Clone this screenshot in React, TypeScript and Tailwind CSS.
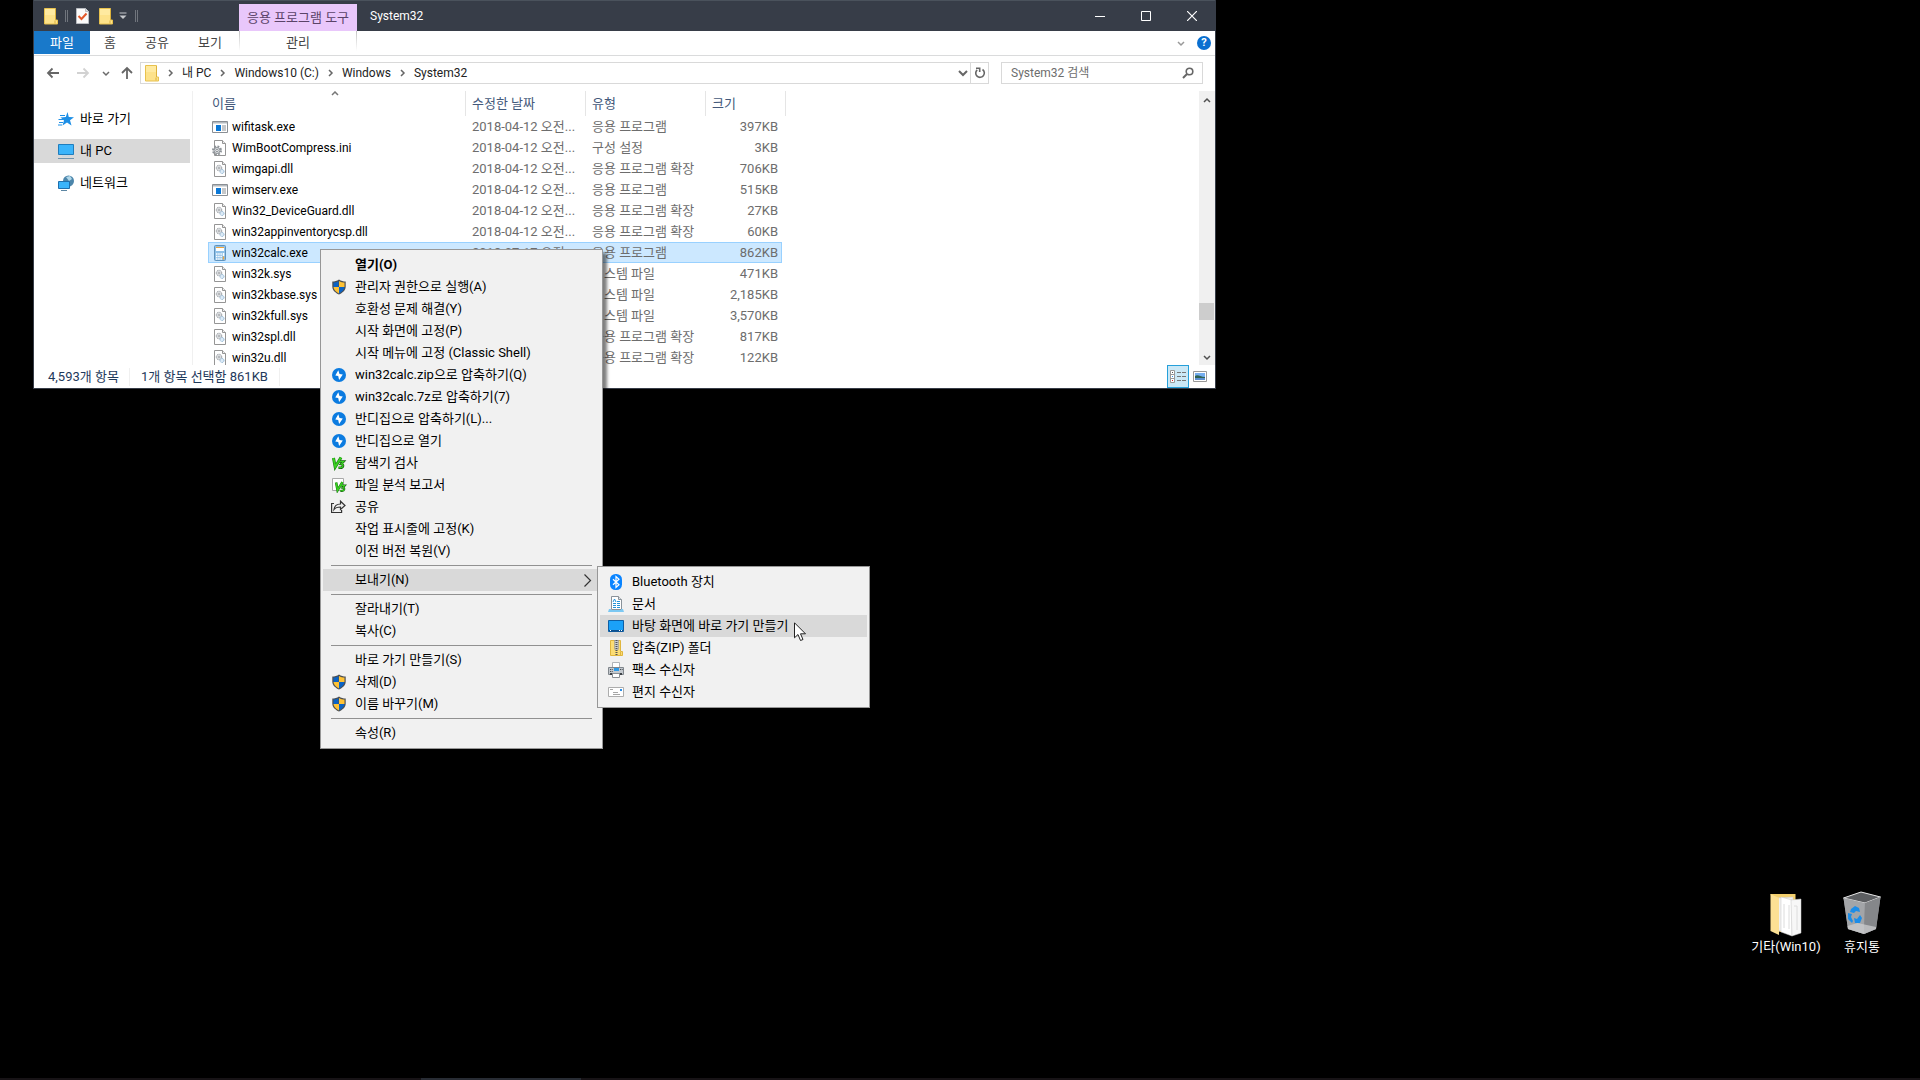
import { useState } from 'react'
import type { ReactNode } from 'react'

type FileKind = 'exe' | 'ini' | 'dll' | 'calc'

const files: { name: string; date: string; type: string; size: string; kind: FileKind }[] = [
  { name: 'wifitask.exe', date: '2018-04-12 오전...', type: '응용 프로그램', size: '397KB', kind: 'exe' },
  { name: 'WimBootCompress.ini', date: '2018-04-12 오전...', type: '구성 설정', size: '3KB', kind: 'ini' },
  { name: 'wimgapi.dll', date: '2018-04-12 오전...', type: '응용 프로그램 확장', size: '706KB', kind: 'dll' },
  { name: 'wimserv.exe', date: '2018-04-12 오전...', type: '응용 프로그램', size: '515KB', kind: 'exe' },
  { name: 'Win32_DeviceGuard.dll', date: '2018-04-12 오전...', type: '응용 프로그램 확장', size: '27KB', kind: 'dll' },
  { name: 'win32appinventorycsp.dll', date: '2018-04-12 오전...', type: '응용 프로그램 확장', size: '60KB', kind: 'dll' },
  { name: 'win32calc.exe', date: '2018-07-17 오전...', type: '응용 프로그램', size: '862KB', kind: 'calc' },
  { name: 'win32k.sys', date: '2018-04-12 오전...', type: '시스템 파일', size: '471KB', kind: 'dll' },
  { name: 'win32kbase.sys', date: '2018-04-12 오전...', type: '시스템 파일', size: '2,185KB', kind: 'dll' },
  { name: 'win32kfull.sys', date: '2018-04-12 오전...', type: '시스템 파일', size: '3,570KB', kind: 'dll' },
  { name: 'win32spl.dll', date: '2018-04-12 오전...', type: '응용 프로그램 확장', size: '817KB', kind: 'dll' },
  { name: 'win32u.dll', date: '2018-04-12 오전...', type: '응용 프로그램 확장', size: '122KB', kind: 'dll' },
]

function FolderIcon() {
  return (
    <svg width="14" height="17" viewBox="0 0 14 17" className="shrink-0">
      <path d="M0.5 0.5h11v11.5h2v4H0.5z" fill="#fde28a" stroke="#e8c24e" />
      <path d="M11.5 12V1M11 12.5v3" stroke="#dcb23c" />
      <path d="M1 1h10v6H1z" fill="#ffeaa0" />
    </svg>
  )
}

function CheckDocIcon() {
  return (
    <svg width="13" height="16" viewBox="0 0 13 16" className="shrink-0">
      <path d="M0.5 0.5h9l3 3v12H0.5z" fill="#fafafa" stroke="#b9bcc2" />
      <path d="M9.5 0.5v3h3" fill="#ddd" stroke="#b9bcc2" />
      <path d="M2.5 8l3 3 5-5.500" fill="none" stroke="#e2582a" strokeWidth="2" />
    </svg>
  )
}

function FileIcon({ kind }: { kind: FileKind }) {
  if (kind === 'exe') {
    return (
      <svg width="16" height="16" viewBox="0 0 16 16" className="shrink-0">
        <path d="M0.500 2.500h15v11h-15z" fill="#fff" stroke="#8a8f94" />
        <path d="M1 3h14v1.500H1z" fill="#b5babf" />
        <path d="M4 6h5v6H4z" fill="#0a78d7" />
        <path d="M10 7h4M10 9h4M10 11h4" stroke="#8a8f94" />
      </svg>
    )
  }
  if (kind === 'calc') {
    return (
      <svg width="16" height="16" viewBox="0 0 16 16" className="shrink-0">
        <rect x="2.500" y="0.500" width="11" height="15" rx="1" fill="#8fc1e8" stroke="#5f93bd" />
        <rect x="4" y="2" width="8" height="4" fill="#fff" />
        <path d="M4 2.500h8" stroke="#f0a53c" />
        <path d="M4 9h6M4 11.500h6M4 14h6" stroke="#fff" strokeWidth="1.500" strokeDasharray="1.500 0.700" />
        <path d="M11.500 8v3" stroke="#fff" strokeWidth="1.500" />
        <path d="M11.500 11.500v3" stroke="#f0a53c" strokeWidth="1.500" />
      </svg>
    )
  }
  if (kind === 'ini') {
    return (
      <svg width="16" height="16" viewBox="0 0 16 16" className="shrink-0">
        <path d="M2.500 0.500h8l3 3v12h-11z" fill="#fff" stroke="#959595" />
        <path d="M10.500 0.500v3h3" fill="#eee" stroke="#959595" />
        <circle cx="5" cy="10.500" r="4" fill="none" stroke="#8d9297" strokeWidth="2" strokeDasharray="1.800 1.340" />
        <circle cx="5" cy="10.500" r="3" fill="#dfe2e4" stroke="#8d9297" />
        <circle cx="5" cy="10.500" r="1.200" fill="#fff" stroke="#8d9297" />
      </svg>
    )
  }
  return (
    <svg width="16" height="16" viewBox="0 0 16 16" className="shrink-0">
      <path d="M2.500 0.500h8l3 3v12h-11z" fill="#fff" stroke="#959595" />
      <path d="M10.500 0.500v3h3" fill="#eee" stroke="#959595" />
      <circle cx="7" cy="7" r="2.700" fill="#eceef0" stroke="#8d9297" strokeDasharray="1.200 0.500" />
      <circle cx="7" cy="7" r="1" fill="#fff" stroke="#8d9297" strokeWidth="0.800" />
      <circle cx="10" cy="10.500" r="2" fill="#dcebf7" stroke="#8fb4d2" strokeDasharray="1.200 0.500" />
    </svg>
  )
}

function ShieldIcon() {
  return (
    <svg width="16" height="16" viewBox="0 0 16 16">
      <path d="M8 0.500C6 2 3.500 2.500 1.300 2.500v5c0 4 3.400 6.500 6.700 8 3.300-1.500 6.700-4 6.700-8v-5C12.500 2.500 10 2 8 0.500z" fill="#4c4f52" />
      <path d="M7.500 2C6 3 4 3.500 2.500 3.600V8h5z" fill="#0b63c5" />
      <path d="M8 2c1.500 1 4 1.500 5.500 1.600V8H8z" fill="#ffc234" />
      <path d="M2.500 8c.200 3 2.600 5 5.500 6.400V8z" fill="#ffc234" />
      <path d="M13.500 8c-.200 3-2.600 5-5.500 6.400V8z" fill="#0b63c5" />
    </svg>
  )
}

function BandizipIcon() {
  return (
    <svg width="16" height="16" viewBox="0 0 16 16">
      <circle cx="8" cy="8" r="7" fill="#0b7be0" />
      <path d="M7.300 3.200L4.300 8.500l2.900.600.900 4 3.700-5.500-3.300-.500z" fill="#fff" />
    </svg>
  )
}

function V3Icon({ page }: { page?: boolean }) {
  const blade = 'M2.500 3l1.700 9L10 2.500'
  const hook = 'M8.500 6.500h4L10.300 9c2.700.200 2 3.700-.800 3.700H7.500'
  return (
    <svg width="16" height="16" viewBox="0 0 16 16" fill="none">
      {page && <path d="M1.500 1.500h11v12h-11z" fill="#fff" stroke="#a9a9a9" />}
      <g transform={page ? 'translate(3 3) scale(0.850)' : undefined}>
        <path d={blade} stroke="#1a7d10" strokeWidth="3" />
        <path d={hook} stroke="#145f0d" strokeWidth="2.600" />
        <path d={blade} stroke="#3ad122" strokeWidth="1.800" />
        <path d={hook} stroke="#3ad122" strokeWidth="1.200" />
      </g>
    </svg>
  )
}

function ShareIcon() {
  return (
    <svg width="16" height="16" viewBox="0 0 16 16" fill="none" stroke="#333" strokeWidth="1.200">
      <path d="M3 4.500H0.600v9h10v-2.500" />
      <path d="M3 10.500c.500-4 2.500-5.500 6.500-5.500V2.200L14 6.500l-4.500 4V8C7 8 4.500 8.500 3 10.500z" />
    </svg>
  )
}

function BluetoothIcon() {
  return (
    <svg width="16" height="16" viewBox="0 0 16 16">
      <rect x="2" y="0" width="12" height="16" rx="5.500" fill="#0a84ff" />
      <path d="M5 5.200l6 5.600-3 2.700v-11l3 2.700-6 5.600" fill="none" stroke="#fff" strokeWidth="1.200" />
    </svg>
  )
}

function DocumentsIcon() {
  return (
    <svg width="16" height="16" viewBox="0 0 16 16">
      <path d="M3.500 0.500h7l3 3v10h-10z" fill="#fff" stroke="#8a9299" />
      <path d="M10.500 0.500v3h3" fill="#dfe3e6" stroke="#8a9299" />
      <path d="M5 6l1.500-3L8 6M9 5.500h3M5 7.500h3M9 7.500h3M5 9.500h3M9 9.500h3M5 11.500h3M9 11.500h3" fill="none" stroke="#2493d8" />
      <path d="M1 13h2v1h10v-1h2l1 3H0z" fill="#7cc8f2" />
    </svg>
  )
}

function DesktopIcon() {
  return (
    <svg width="16" height="16" viewBox="0 0 16 16">
      <path d="M0.500 2.500h15v11h-15z" fill="#1ba1f8" stroke="#0e5fa5" />
      <path d="M1 12h14v1.500H1z" fill="#0c4f8d" />
      <path d="M2 12.500h1M11 12.500h1M13 12.500h1" stroke="#fff" />
    </svg>
  )
}

function ZipIcon() {
  return (
    <svg width="16" height="16" viewBox="0 0 16 16">
      <path d="M2.500 0.500h10v11h2v4h-12z" fill="#fbdc74" stroke="#e0b63e" />
      <path d="M6.500 0h4v9l-1 1h-2l-1-1z" fill="#c9cccf" stroke="#888" strokeWidth="0.500" />
      <path d="M8.500 0v16" stroke="#555" strokeWidth="2" strokeDasharray="1 1" />
      <path d="M12.500 12v3" stroke="#e0b63e" />
    </svg>
  )
}

function FaxIcon() {
  return (
    <svg width="16" height="16" viewBox="0 0 16 16">
      <path d="M4.500 0.500h7v5h-7z" fill="#fff" stroke="#b0b4b8" />
      <path d="M0.500 5.500h15v7h-15z" fill="#c3c8cd" stroke="#80868c" />
      <path d="M6 6h5v3H6z" fill="#2d9be8" />
      <path d="M2 7.500h3M2 9.500h3M12 7.500h3" stroke="#4b5157" strokeDasharray="1 0.700" />
      <path d="M2 11h12v2H2z" fill="#3c4146" />
      <path d="M4.500 11.500h7v4h-7z" fill="#fff" stroke="#8a8f94" />
    </svg>
  )
}

function MailIcon() {
  return (
    <svg width="16" height="16" viewBox="0 0 16 16">
      <path d="M0.500 3.500h15v9h-15z" fill="#fff" stroke="#adadad" />
      <path d="M2 5.500h3M5 8.500h5M5 10.500h7" stroke="#a5a5a5" />
      <path d="M12 5h2v2h-2z" fill="#2d8fe8" />
    </svg>
  )
}

function Chevron({ dir, className }: { dir: 'up' | 'down' | 'right'; className?: string }) {
  const paths = { up: 'M1 6l3-3 3 3', down: 'M1 3l3 3 3-3', right: 'M3 1l3 3-3 3' }
  return (
    <svg width="8" height="8" viewBox="0 0 8 8" fill="none" stroke="currentColor" strokeWidth="1.500" className={className}>
      <path d={paths[dir]} />
    </svg>
  )
}

type MenuEntry = { label: string; icon?: ReactNode; bold?: boolean; active?: boolean; arrow?: boolean } | 'line'

const contextMenu: MenuEntry[] = [
  { label: '열기(O)', bold: true },
  { label: '관리자 권한으로 실행(A)', icon: <ShieldIcon /> },
  { label: '호환성 문제 해결(Y)' },
  { label: '시작 화면에 고정(P)' },
  { label: '시작 메뉴에 고정 (Classic Shell)' },
  { label: 'win32calc.zip으로 압축하기(Q)', icon: <BandizipIcon /> },
  { label: 'win32calc.7z로 압축하기(7)', icon: <BandizipIcon /> },
  { label: '반디집으로 압축하기(L)...', icon: <BandizipIcon /> },
  { label: '반디집으로 열기', icon: <BandizipIcon /> },
  { label: '탐색기 검사', icon: <V3Icon /> },
  { label: '파일 분석 보고서', icon: <V3Icon page /> },
  { label: '공유', icon: <ShareIcon /> },
  { label: '작업 표시줄에 고정(K)' },
  { label: '이전 버전 복원(V)' },
  'line',
  { label: '보내기(N)', active: true, arrow: true },
  'line',
  { label: '잘라내기(T)' },
  { label: '복사(C)' },
  'line',
  { label: '바로 가기 만들기(S)' },
  { label: '삭제(D)', icon: <ShieldIcon /> },
  { label: '이름 바꾸기(M)', icon: <ShieldIcon /> },
  'line',
  { label: '속성(R)' },
]

const sendToMenu: MenuEntry[] = [
  { label: 'Bluetooth 장치', icon: <BluetoothIcon /> },
  { label: '문서', icon: <DocumentsIcon /> },
  { label: '바탕 화면에 바로 가기 만들기', icon: <DesktopIcon />, active: true },
  { label: '압축(ZIP) 폴더', icon: <ZipIcon /> },
  { label: '팩스 수신자', icon: <FaxIcon /> },
  { label: '편지 수신자', icon: <MailIcon /> },
]

function Menu({ items, className }: { items: MenuEntry[]; className: string }) {
  return (
    <div role="menu" className={`absolute border border-[#979797] bg-[#f1f1f1] px-0.5 py-1 text-black ${className}`}>
      {items.map((item, i) =>
        item === 'line' ? (
          <div key={i} className="mx-2 flex h-[7px] items-center">
            <div className="h-px w-full bg-[#919191]" />
          </div>
        ) : (
          <button
            key={i}
            role="menuitem"
            className={`flex h-[22px] w-full items-center pr-2 pl-2 text-left whitespace-nowrap ${item.active ? 'bg-[#d9d9d9]' : ''} ${item.bold ? 'font-bold' : ''}`}
          >
            <span className="mr-2 w-4 shrink-0">{item.icon}</span>
            <span className="flex-1">{item.label}</span>
            {item.arrow && (
              <svg width="9" height="13" viewBox="0 0 9 13" fill="none" stroke="#333" strokeWidth="1.200">
                <path d="M1.500 0.500l6 6-6 6" />
              </svg>
            )}
          </button>
        )
      )}
    </div>
  )
}

function TitleBar() {
  return (
    <div className="flex h-[31px] border-t border-[#4a525c] bg-[#373d48]">
      <div className="flex w-[205px] items-center pl-2.5">
        <FolderIcon />
        <span className="ml-[7px] h-3 w-[3px] border-x border-[#70757d]" />
        <span className="ml-2"><CheckDocIcon /></span>
        <span className="ml-2.5"><FolderIcon /></span>
        <svg width="8" height="8" viewBox="0 0 8 8" className="ml-1.5">
          <path d="M0.500 1h7" stroke="#c5c8cc" />
          <path d="M0.500 3.500h7L4 7z" fill="#c5c8cc" />
        </svg>
        <span className="ml-2 h-3 w-[3px] border-x border-[#70757d]" />
      </div>
      <div className="mt-[3px] flex w-[118px] items-center justify-center bg-[#e9c7fb] text-[#5a4368]">응용 프로그램 도구</div>
      <h1 className="flex-1 self-center pl-[13px] text-xs text-white">System32</h1>
      <button aria-label="최소화" className="flex w-[46px] items-center justify-center">
        <svg width="10" height="10"><path d="M0 5.500h10" stroke="#fff" /></svg>
      </button>
      <button aria-label="최대화" className="flex w-[46px] items-center justify-center">
        <svg width="10" height="10"><path d="M0.500 0.500h9v9h-9z" fill="none" stroke="#fff" /></svg>
      </button>
      <button aria-label="닫기" className="flex w-[46px] items-center justify-center">
        <svg width="10" height="10"><path d="M0 0l10 10M10 0L0 10" stroke="#fff" strokeWidth="1.200" /></svg>
      </button>
    </div>
  )
}

function RibbonTabs() {
  return (
    <div className="flex h-[25px] border-b border-[#dadbdc] text-[#444]">
      <button className="mb-px w-14 bg-[#1979ca] text-white">파일</button>
      <button className="w-10">홈</button>
      <button className="w-[54px]">공유</button>
      <button className="w-[52px]">보기</button>
      <div className="ml-[3px] flex w-[118px]">
        <div className="h-5 w-px bg-linear-to-b from-[#c4c4c4] to-white" />
        <button className="flex-1">관리</button>
        <div className="h-5 w-px bg-linear-to-b from-[#c4c4c4] to-white" />
      </div>
      <div className="flex flex-1 items-center justify-end gap-3 pr-1">
        <button aria-label="리본 확장"><Chevron dir="down" className="text-[#999]" /></button>
        <button aria-label="도움말" className="size-3.5 rounded-full bg-[#0a6fd0] text-center text-[11px] leading-[14px] font-bold text-white">?</button>
      </div>
    </div>
  )
}

function AddressBar() {
  return (
    <div className="flex h-[35px] items-center pr-3 pb-px text-[#222]">
      <div className="flex w-[106px] items-center pl-3 text-[#6b6b6b]">
        <button aria-label="뒤로">
          <svg width="14" height="12" viewBox="0 0 14 12" fill="none" stroke="#666" strokeWidth="1.800"><path d="M13 6H2M6.500 1.500L2 6l4.500 4.500" /></svg>
        </button>
        <button aria-label="앞으로" className="ml-4">
          <svg width="14" height="12" viewBox="0 0 14 12" fill="none" stroke="#d2d2d2" strokeWidth="1.800"><path d="M1 6h11M7.500 1.500L12 6l-4.500 4.500" /></svg>
        </button>
        <button aria-label="최근 위치" className="ml-3"><Chevron dir="down" /></button>
        <button aria-label="위로" className="ml-2.5">
          <svg width="14" height="14" viewBox="0 0 14 14" fill="none" stroke="#666" strokeWidth="1.800"><path d="M7 13V2M2 7l5-5 5 5" /></svg>
        </button>
      </div>
      <div className="flex h-[22px] flex-1 items-center border border-[#d9d9d9] pl-1">
        <FolderIcon />
        {['내 PC', 'Windows10 (C:)', 'Windows', 'System32'].map((crumb) => (
          <span key={crumb} className="flex items-center">
            <Chevron dir="right" className="mr-2 ml-[7px] text-[#666]" />
            <a href="#" className="text-xs whitespace-nowrap">{crumb}</a>
          </span>
        ))}
        <button aria-label="이전 위치" className="ml-auto pr-0.5">
          <svg width="10" height="8" viewBox="0 0 10 8" fill="none" stroke="#666" strokeWidth="2"><path d="M1 2l4 4 4-4" /></svg>
        </button>
        <button aria-label="새로 고침" className="flex h-full w-[18px] items-center justify-center border-l border-[#d9d9d9]">
          <svg width="12" height="12" viewBox="0 0 12 12" fill="none" stroke="#666" strokeWidth="1.600">
            <path d="M8.500 2.500a4.300 4.300 0 1 1-5.300.300" />
            <path d="M2 1.300h3.700V5" />
          </svg>
        </button>
      </div>
      <label className="ml-3 flex h-[22px] w-[202px] items-center border border-[#d9d9d9] pr-2 pl-[9px]">
        <input aria-label="System32 검색" placeholder="System32 검색" className="w-full min-w-0 text-xs outline-none placeholder:text-[#6d6d6d]" />
        <svg width="12" height="12" viewBox="0 0 12 12" fill="none" stroke="#666" strokeWidth="1.600" className="shrink-0">
          <circle cx="7.500" cy="4.500" r="3.300" />
          <path d="M5 7L1 11" strokeWidth="2" />
        </svg>
      </label>
    </div>
  )
}

function Sidebar() {
  return (
    <nav className="flex w-[159px] flex-col gap-2 border-r border-[#f0f0f0] pt-4 pr-0.5 text-black">
      <a href="#" className="flex h-6 items-center gap-1.5 pl-6">
        <svg width="16" height="16" viewBox="0 0 16 16">
          <path d="M9.500 1l1.300 5L16 6.200 12 9.300l1.500 5.200-4.500-3-4.500 3L6 9.500 2.500 6.500 7.800 6z" fill="#1d8fe6" />
          <path d="M2 4.500h5M0.500 8.500h5M1 11.500h4M0 14h4" stroke="#1d8fe6" />
        </svg>
        바로 가기
      </a>
      <a href="#" className="flex h-6 items-center gap-1.5 bg-[#d9d9d9] pl-6">
        <svg width="16" height="16" viewBox="0 0 16 16">
          <path d="M0.500 1.500h15v10h-15z" fill="#3ab4fb" stroke="#1f7dbd" />
          <path d="M4 13h8" stroke="#b9d4e6" />
          <path d="M0 15.500h16" stroke="#6f93ad" />
        </svg>
        내 PC
      </a>
      <a href="#" className="flex h-6 items-center gap-1.5 pl-6">
        <svg width="16" height="16" viewBox="0 0 16 16">
          <circle cx="10.500" cy="6" r="5.500" fill="#4c86ab" />
          <path d="M8 2l4-1 2 3-3 2z" fill="#b2d8ea" />
          <path d="M0.500 6.500h11v7h-11z" fill="#3ab4fb" stroke="#1f6fad" />
          <path d="M3 15.500h6" stroke="#5c86a3" />
        </svg>
        네트워크
      </a>
    </nav>
  )
}

function FileTable() {
  const [selected, setSelected] = useState('win32calc.exe')

  return (
    <div className="flex-1 overflow-hidden pl-[15px]">
      <table className="w-[578px] table-fixed border-separate border-spacing-0">
        <thead>
          <tr className="h-[25px] text-left text-[#44597b] *:border-[#e5e5e5] *:font-normal">
            <th className="relative w-[258px] border-r pl-1">
              이름
              <Chevron dir="up" className="absolute -top-0.5 left-[123px] text-[#777]" />
            </th>
            <th className="w-[120px] border-r pl-1.5">수정한 날짜</th>
            <th className="w-[120px] border-r pl-1.5">유형</th>
            <th className="w-[76px] pl-1.5">크기</th>
            <td className="w-1 border-r" />
          </tr>
        </thead>
        <tbody>
          {files.map((file) => {
            const isSelected = file.name === selected
            const cell = isSelected ? 'border-y border-[#99d1ff] bg-[#cce8ff]' : ''
            return (
              <tr key={file.name} onClick={() => setSelected(file.name)} className="h-[21px] leading-[18px] whitespace-nowrap text-[#6d6d6d]">
                <td className={`text-xs leading-[18px] text-black ${cell} ${isSelected ? 'border-l pl-[3px]' : 'pl-1'}`}>
                  <div className="flex items-center gap-1">
                    <FileIcon kind={file.kind} />
                    {file.name}
                  </div>
                </td>
                <td className={`pl-1.5 ${cell}`}>{file.date}</td>
                <td className={`pl-1.5 ${cell}`}>{file.type}</td>
                <td className={`text-right ${cell} ${isSelected ? 'border-r pr-[3px]' : 'pr-1'}`}>{file.size}</td>
              </tr>
            )
          })}
        </tbody>
      </table>
    </div>
  )
}

function ScrollBar() {
  return (
    <div className="flex w-4 flex-col items-center bg-[#f0f0f0] pr-px text-[#505050]">
      <button aria-label="위로 스크롤" className="flex h-[17px] items-center">
        <Chevron dir="up" />
      </button>
      <div className="flex w-full flex-1 flex-col justify-end pb-7">
        <div className="h-[17px] bg-[#cdcdcd]" />
      </div>
      <button aria-label="아래로 스크롤" className="flex h-[17px] items-center">
        <Chevron dir="down" />
      </button>
    </div>
  )
}

function StatusBar() {
  return (
    <div className="flex h-[23px] items-center text-[#1e395b]">
      <span className="w-24 border-r border-[#f0f0f0] pl-3.5">4,593개 항목</span>
      <span className="border-r border-[#f0f0f0] px-[11px]">1개 항목 선택함 861KB</span>
      <button aria-label="자세히" className="ml-auto flex h-full w-[22px] items-center justify-center border border-[#26a0da] bg-[#cbe8f6]">
        <svg width="16" height="13" viewBox="0 0 16 13" fill="none">
          <path d="M0.500 0.500h4v12h-4zM0.500 4.500h4M0.500 8.500h4" fill="#fff" stroke="#999" />
          <path d="M7 2.500h4M12 2.500h4M7 6.500h4M12 6.500h4M7 10.500h4M12 10.500h4" stroke="#777" />
          <path d="M2 2.500h1" stroke="#555" />
          <path d="M2 6.500h1" stroke="#2d8fe8" />
          <path d="M2 10.500h1" stroke="#e02020" />
        </svg>
      </button>
      <button aria-label="큰 아이콘" className="mr-2 ml-1">
        <svg width="14" height="11" viewBox="0 0 14 11">
          <path d="M0.500 0.500h13v10h-13z" fill="#fff" stroke="#999" />
          <path d="M2 2h10v7H2z" fill="#75aef0" />
          <path d="M2 5c3-2 5 1 10 1v1H2z" fill="#2f6353" />
          <path d="M2 7h10v2H2z" fill="#5c8fd0" />
        </svg>
      </button>
    </div>
  )
}

export default function App() {
  return (
    <div className="relative flex h-screen flex-col justify-end overflow-hidden bg-black font-[Roboto,'Noto_Sans_CJK_KR',sans-serif] text-[13px] leading-[18px]">
      <main className="absolute top-0 left-[33px] w-[1183px] border-x border-b border-[#373d48] bg-white">
        <TitleBar />
        <RibbonTabs />
        <AddressBar />
        <div className="flex h-[274px]">
          <Sidebar />
          <FileTable />
          <ScrollBar />
        </div>
        <StatusBar />
      </main>

      <Menu items={contextMenu} className="top-[249px] left-[320px] w-[283px] shadow-[4px_4px_3px_rgba(0,0,0,0.5)]" />
      <Menu items={sendToMenu} className="top-[566px] left-[597px] w-[273px]" />

      <svg width="13" height="20" viewBox="0 0 13 20" className="absolute top-[622px] left-[794px]">
        <path d="M0.500 0.800v15l3.500-3.300 2.500 6 2.500-1-2.500-5.700h5z" fill="#fff" stroke="#222" />
      </svg>

      <button className="absolute top-[890px] left-[1746px] flex w-20 flex-col items-center text-white">
        <svg width="32" height="48" viewBox="0 0 32 48">
          <path d="M0.500 4h25v38h-16z" fill="#f3cf6c" />
          <path d="M5 8l18-1v34H9z" fill="#f1f1f1" stroke="#c9c9c9" strokeWidth="0.500" />
          <path d="M11 7l11 3v36l-11-4z" fill="#fff" stroke="#c4c4c4" strokeWidth="0.500" />
          <path d="M21 10l10-1v34l-9 3z" fill="#f7f7f7" stroke="#c4c4c4" strokeWidth="0.500" />
          <path d="M24 16h3v24M14 14v24M19 15v24" fill="none" stroke="#dcdcdc" />
          <path d="M0.500 4l8.500 4v37L0.500 41z" fill="#fce094" />
        </svg>
        <span className="whitespace-nowrap">기타(Win10)</span>
      </button>
      <button className="absolute top-[890px] left-[1822px] flex w-20 flex-col items-center text-white">
        <svg width="38" height="48" viewBox="0 0 38 48">
          <path d="M0.500 8L18 2l19.500 5L33 39l-12 5L5 39z" fill="#8d8f92" />
          <path d="M0.500 8L18 2l19.500 5L22 13z" fill="#5c5e61" stroke="#e4e4e4" />
          <path d="M0.500 8L22 13l-1 31L5 39z" fill="#a3a5a8" />
          <path d="M22 13l15.500-6L33 39l-12 5z" fill="#85878a" />
          <path d="M4.500 36l10-3 18.500 4v2l-12 5L5 39z" fill="#cfd0d2" opacity="0.700" />
          <g fill="#1c8de8">
            <path d="M8 19l4-3 4 2 1 4-4-1-2 2-4-1z" />
            <path d="M5 23l4 1-1 3 2 4-1 2-4-4z" />
            <path d="M11 28l3 1 3-4 2 3-2 5-5 0z" />
          </g>
        </svg>
        <span className="whitespace-nowrap">휴지통</span>
      </button>

      <footer className="flex h-0.5 bg-[#171316]">
        <div className="ml-[421px] w-40 bg-[#282c34]" />
      </footer>
    </div>
  )
}
